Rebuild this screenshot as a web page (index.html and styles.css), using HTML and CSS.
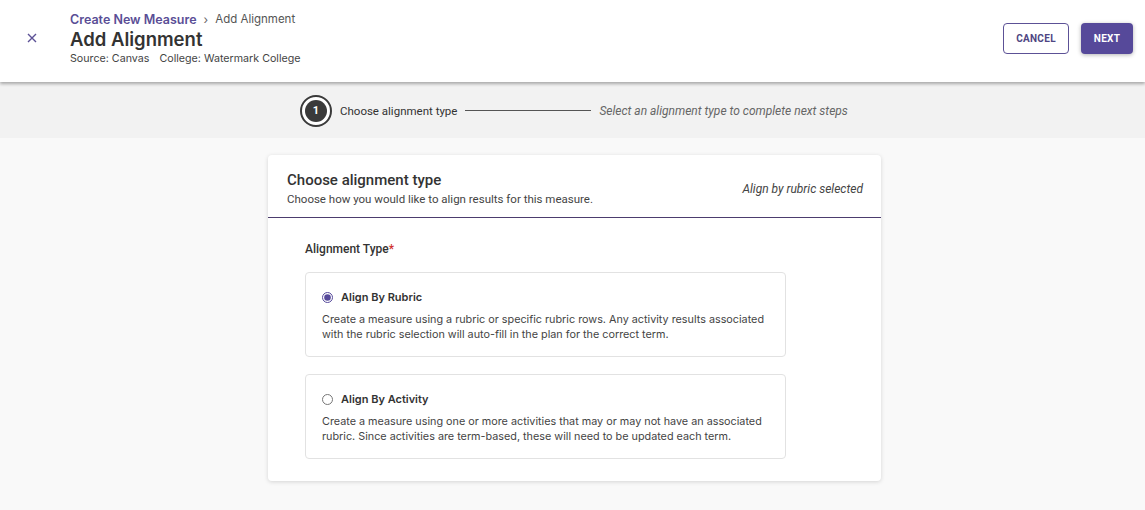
FILE: index.html
```html
<!DOCTYPE html>
<html lang="en">
<head>
    <meta charset="UTF-8">
    <meta name="viewport" content="width=device-width, initial-scale=1.0">
    <title>Add Alignment</title>
    <link rel="stylesheet" href="styles.css">
</head>
<body>
    <header class="topbar">
        <button class="close-btn" aria-label="Close">
            <svg width="10" height="10" viewBox="0 0 10 10"><path d="M1 1L9 9M9 1L1 9" stroke="#5c5196" stroke-width="1.4" fill="none"/></svg>
        </button>
        <div class="title-block">
            <div class="crumbs">
                <a href="#" class="crumb-link">Create New Measure</a>
                <span class="crumb-sep">›</span>
                <span class="crumb-current">Add Alignment</span>
            </div>
            <h1>Add Alignment</h1>
            <div class="meta">
                <span>Source: Canvas</span>
                <span>College: Watermark College</span>
            </div>
        </div>
        <div class="actions">
            <button class="btn btn-outline">CANCEL</button>
            <button class="btn btn-primary">NEXT</button>
        </div>
    </header>

    <div class="stepper">
        <div class="step-circle"><span>1</span></div>
        <span class="step-label">Choose alignment type</span>
        <span class="step-line"></span>
        <span class="step-hint">Select an alignment type to complete next steps</span>
    </div>

    <main class="content">
        <section class="card">
            <div class="card-head">
                <div>
                    <h2>Choose alignment type</h2>
                    <p>Choose how you would like to align results for this measure.</p>
                </div>
                <span class="card-status">Align by rubric selected</span>
            </div>
            <div class="card-body">
                <div class="field-label">Alignment Type<span class="req">*</span></div>

                <label class="option">
                    <div class="option-title">
                        <input type="radio" name="type" checked>
                        <span>Align By Rubric</span>
                    </div>
                    <p>Create a measure using a rubric or specific rubric rows. Any activity results associated with the rubric selection will auto-fill in the plan for the correct term.</p>
                </label>

                <label class="option">
                    <div class="option-title">
                        <input type="radio" name="type">
                        <span>Align By Activity</span>
                    </div>
                    <p>Create a measure using one or more activities that may or may not have an associated rubric. Since activities are term-based, these will need to be updated each term.</p>
                </label>
            </div>
        </section>
    </main>
</body>
</html>
```

FILE: styles.css
```css
body {
    margin: 0;
    font-family: Inter, "Noto Sans", sans-serif;
    background-color: #f9f9f9;
    color: #333;
    height: 510px;
    overflow: hidden;
}
.topbar {
    background-color: white;
    height: 82px;
    box-sizing: border-box;
    display: flex;
    align-items: flex-start;
    padding: 12px 12px 0 24px;
    box-shadow: 0 2px 3px rgba(0, 0, 0, 0.3);
    position: relative;
    z-index: 1;
}
.close-btn {
    background: none;
    border: none;
    padding: 0;
    width: 16px;
    height: 16px;
    margin-top: 18px;
    display: flex;
    align-items: center;
    justify-content: center;
    cursor: pointer;
}
.title-block {
    margin-left: 30px;
}
.crumbs {
    display: flex;
    align-items: center;
    gap: 6px;
    line-height: 15px;
}
.crumb-link {
    color: #5a4e96;
    font-weight: 600;
    font-size: 12.5px;
    text-decoration: none;
}
.crumb-sep {
    color: #666;
    font-size: 12px;
    margin: 0 1px;
}
.crumb-current {
    color: #555;
    font-size: 11.5px;
}
h1 {
    margin: 0;
    font-size: 18.5px;
    font-weight: 600;
    color: #333;
    line-height: 24px;
}
.meta {
    font-size: 10.7px;
    color: #444;
    margin-top: 1px;
    display: flex;
    gap: 10px;
}
.actions {
    margin-left: auto;
    display: flex;
    gap: 12px;
    margin-top: 11px;
}
.btn {
    font-family: Roboto, "Liberation Sans", sans-serif;
    font-size: 10px;
    font-weight: bold;
    letter-spacing: 0.3px;
    height: 31px;
    border-radius: 4px;
    cursor: pointer;
}
.btn-outline {
    background-color: white;
    color: #4f4683;
    border: 1px solid #5c5196;
    width: 66px;
}
.btn-primary {
    background-color: #56499a;
    color: white;
    border: none;
    width: 52px;
    box-shadow: 0 1px 4px rgba(0, 0, 0, 0.3);
}
.stepper {
    background-color: #f2f2f2;
    height: 56px;
    display: flex;
    align-items: center;
    padding-left: 300px;
    padding-top: 1px;
    box-sizing: border-box;
    font-family: Roboto, "Liberation Sans", sans-serif;
    font-size: 11.5px;
}
.step-circle {
    width: 28px;
    height: 28px;
    border: 2px solid #3a3a3a;
    border-radius: 50%;
    display: flex;
    align-items: center;
    justify-content: center;
    background: white;
}
.step-circle span {
    width: 22px;
    height: 22px;
    border-radius: 50%;
    background-color: #3a3a3a;
    color: white;
    font-size: 11px;
    font-weight: bold;
    display: flex;
    align-items: center;
    justify-content: center;
}
.step-label {
    margin-left: 8px;
    color: #333;
}
.step-line {
    width: 126px;
    height: 1px;
    background-color: #555;
    margin: 0 8px;
}
.step-hint {
    font-style: italic;
    font-size: 12px;
    color: #666;
}
.content {
    display: flex;
    justify-content: center;
    padding-top: 17px;
    padding-left: 4px;
}
.card {
    width: 613px;
    background-color: white;
    border-radius: 4px;
    box-shadow: 0 1px 4px rgba(0, 0, 0, 0.15);
}
.card-head {
    display: flex;
    justify-content: space-between;
    align-items: center;
    padding: 16px 18px 11px 19px;
    border-bottom: 1.5px solid #4c3d6e;
    font-family: Roboto, "Liberation Sans", sans-serif;
}
.card-head h2 {
    margin: 0;
    font-size: 15px;
    font-weight: 500;
    color: #333;
    line-height: 19px;
}
.card-head p {
    margin: 2px 0 0;
    font-size: 11.5px;
    color: #444;
}
.card-status {
    font-style: italic;
    font-size: 12px;
    color: #444;
    margin-top: 0;
}
.card-body {
    padding: 24px 37px 22px 37px;
}
.field-label {
    font-family: Roboto, "Liberation Sans", sans-serif;
    font-size: 12px;
    font-weight: 500;
    color: #333;
    margin-bottom: 16px;
}
.req {
    color: #d0312d;
}
.option {
    display: block;
    width: 481px;
    box-sizing: border-box;
    border: 1px solid #e2e2e2;
    border-radius: 4px;
    padding: 17px 14px 14px 16px;
    margin-bottom: 17px;
    cursor: pointer;
}
.option:last-child {
    margin-bottom: 0;
}
.option-title {
    display: flex;
    align-items: center;
    font-size: 11px;
    font-weight: 600;
    color: #333;
}
.option-title input {
    width: 11px;
    height: 11px;
    margin: 0 8px 0 0;
    accent-color: #56499a;
}
.option p {
    margin: 8px 0 0;
    font-size: 10.8px;
    line-height: 15px;
    color: #444;
}
```
